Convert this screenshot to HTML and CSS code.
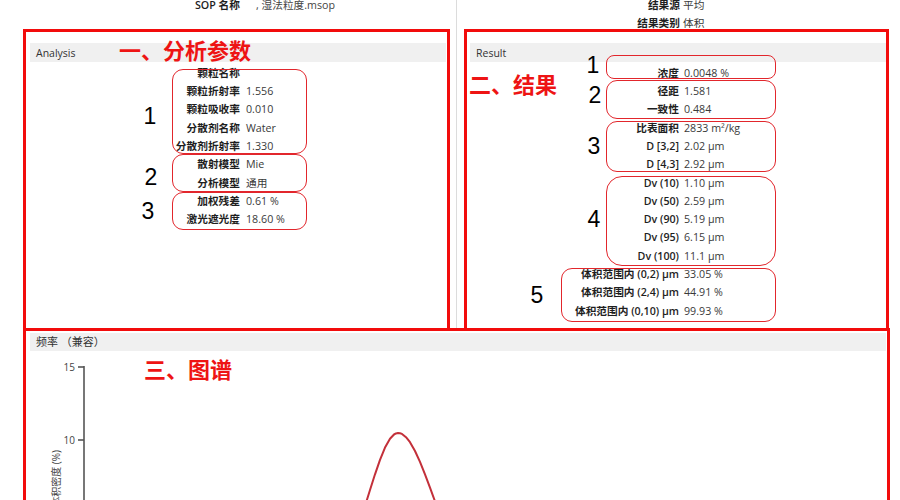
FILE: index.html
```html
<!DOCTYPE html>
<html lang="zh-CN">
<head>
<meta charset="utf-8">
<title>分析结果</title>
<link rel="stylesheet" href="styles.css">
</head>
<body>
<div class="page">
  <div class="upper">
    <div class="col col-left">
      <div class="meta">
        <div class="kv kv-top-left">
          <span class="k">SOP 名称</span><span class="v">, 湿法粒度.msop</span>
        </div>
      </div>
      <section class="panel panel-left">
        <div class="panel-head">Analysis</div>
        <div class="kv kv-left">
          <span class="k">颗粒名称</span><span class="v"></span>
          <span class="k">颗粒折射率</span><span class="v">1.556</span>
          <span class="k">颗粒吸收率</span><span class="v">0.010</span>
          <span class="k">分散剂名称</span><span class="v">Water</span>
          <span class="k">分散剂折射率</span><span class="v">1.330</span>
          <span class="k">散射模型</span><span class="v">Mie</span>
          <span class="k">分析模型</span><span class="v">通用</span>
          <span class="k">加权残差</span><span class="v">0.61 %</span>
          <span class="k">激光遮光度</span><span class="v">18.60 %</span>
        </div>
      </section>
    </div>
    <div class="sep"></div>
    <div class="col col-right">
      <div class="meta">
        <div class="kv kv-top-right">
          <span class="k">结果源</span><span class="v">平均</span>
          <span class="k">结果类别</span><span class="v">体积</span>
        </div>
      </div>
      <section class="panel panel-right">
        <div class="panel-head">Result</div>
        <div class="kv kv-right">
          <span class="k">浓度</span><span class="v">0.0048 %</span>
          <span class="k">径距</span><span class="v">1.581</span>
          <span class="k">一致性</span><span class="v">0.484</span>
          <span class="k">比表面积</span><span class="v">2833 m²/kg</span>
          <span class="k">D [3,2]</span><span class="v">2.02 μm</span>
          <span class="k">D [4,3]</span><span class="v">2.92 μm</span>
          <span class="k">Dv (10)</span><span class="v">1.10 μm</span>
          <span class="k">Dv (50)</span><span class="v">2.59 μm</span>
          <span class="k">Dv (90)</span><span class="v">5.19 μm</span>
          <span class="k">Dv (95)</span><span class="v">6.15 μm</span>
          <span class="k">Dv (100)</span><span class="v">11.1 μm</span>
          <span class="k">体积范围内 (0,2) μm</span><span class="v">33.05 %</span>
          <span class="k">体积范围内 (2,4) μm</span><span class="v">44.91 %</span>
          <span class="k">体积范围内 (0,10) μm</span><span class="v">99.93 %</span>
        </div>
      </section>
    </div>
  </div>

  <section class="graph">
    <div class="panel-head">频率 （兼容）</div>
    <svg class="chart" width="856" height="150" viewBox="0 0 856 150">
      <g transform="translate(-30 -351)">
        <line class="axis" x1="84" y1="366" x2="84" y2="520"/>
        <line class="axis" x1="78" y1="367" x2="84" y2="367"/>
        <line class="axis" x1="78" y1="440" x2="84" y2="440"/>
        <text class="tick" x="75" y="370.5" text-anchor="end">15</text>
        <text class="tick" x="75" y="443.5" text-anchor="end">10</text>
        <text class="ylabel" transform="translate(60 450) rotate(-90)" text-anchor="end">体积密度 (%)</text>
        <polyline class="curve" points="340,565 350,547 360,521 365,506 370,490 375,474.3 380,459.8 385,447.6 390,438.7 394,434.5 396,433.4 398,433 400,433.2 402,433.9 406,437.2 410,442.2 415,451 420,461.9 425,474.4 430,487.7 435,501.4 440,514.7 450,538.5"/>
      </g>
    </svg>
  </section>

  <!-- annotation overlays -->
  <div class="note-title nt1">一、分析参数</div>
  <div class="note-title nt2">二、结果</div>
  <div class="note-title nt3">三、图谱</div>

  <div class="ring rl1"></div>
  <div class="ring rl2"></div>
  <div class="ring rl3"></div>
  <div class="ring rr1"></div>
  <div class="ring rr2"></div>
  <div class="ring rr3"></div>
  <div class="ring rr4"></div>
  <div class="ring rr5"></div>

  <div class="num nl1">1</div>
  <div class="num nl2">2</div>
  <div class="num nl3">3</div>
  <div class="num nr1">1</div>
  <div class="num nr2">2</div>
  <div class="num nr3">3</div>
  <div class="num nr4">4</div>
  <div class="num nr5">5</div>
</div>
</body>
</html>
```

FILE: styles.css
```css
html, body {
  margin: 0;
  padding: 0;
  background: #ffffff;
}

body {
  font-family: "Open Sans", "Noto Sans CJK SC", sans-serif;
  font-size: 10.7px;
  color: #222;
}

.page {
  position: relative;
  width: 900px;
  height: 500px;
  overflow: hidden;
}

.upper {
  display: flex;
  height: 328px;
}

.col-left {
  width: 450px;
}

.sep {
  width: 6px;
  margin-right: 7px;
  border-right: 1px solid #dcdcdc;
}

.col-right {
  width: 425px;
}

.meta {
  display: flow-root;
  height: 29px;
}

.kv {
  display: grid;
  align-items: center;
}

.kv .k {
  text-align: right;
  font-weight: 600;
  color: #1e1e1e;
  white-space: nowrap;
}

.kv .v {
  color: #3a3a3a;
  white-space: nowrap;
}

.kv-top-left {
  margin-top: -4px;
  line-height: 18px;
  grid-template-columns: 240px auto;
  column-gap: 16px;
}

.kv-top-left .v {
  color: #444;
}

.kv-top-right {
  margin-top: -4px;
  line-height: 18px;
  grid-template-columns: 216px auto;
  column-gap: 3px;
}

.panel {
  box-sizing: border-box;
  height: 299px;
  border: 3px solid #f20c0c;
  border-bottom: none;
}

.panel-left {
  margin-left: 23px;
  width: 427px;
  padding: 11px 1px 0 4px;
}

.panel-right {
  width: 425px;
  padding: 11px 0 0 3px;
}

.panel-head {
  height: 19px;
  line-height: 20px;
  padding-left: 6px;
  background: #f0f0f0;
  font-size: 10.5px;
  color: #333;
}

.kv-left,
.kv-right {
  margin-top: 1.8px;
  line-height: 18.3px;
}

.kv-left {
  grid-template-columns: 210px auto;
  column-gap: 6px;
}

.kv-right {
  grid-template-columns: 209px auto;
  column-gap: 5px;
}

.graph {
  box-sizing: border-box;
  margin-left: 23px;
  width: 867px;
  height: 172px;
  border: 3px solid #f20c0c;
  border-bottom: none;
  padding: 2px 1px 0 4px;
}

.graph .panel-head {
  height: 18px;
  line-height: 18px;
  font-size: 11px;
}

.chart {
  display: block;
}

.axis {
  stroke: #555;
  stroke-width: 1.6;
}

.tick {
  font-family: "Open Sans", sans-serif;
  font-size: 10px;
  fill: #444;
}

.ylabel {
  font-family: "Open Sans", "Noto Sans CJK SC", sans-serif;
  font-size: 10px;
  fill: #444;
}

.curve {
  fill: none;
  stroke: #c3303a;
  stroke-width: 2;
  stroke-linejoin: round;
}

/* annotation overlays */
.note-title {
  position: absolute;
  font-family: "Noto Sans CJK SC", sans-serif;
  font-weight: 700;
  font-size: 22px;
  line-height: 22px;
  color: #ee1414;
  white-space: nowrap;
}

.nt1 { left: 119px; top: 38px; }
.nt2 { left: 469px; top: 72px; }
.nt3 { left: 144px; top: 357px; }

.ring {
  position: absolute;
  box-sizing: border-box;
  border: 1.5px solid #e2262c;
  border-radius: 11px;
}

.rl1 { left: 172px; top: 69px;  width: 135px; height: 85px; }
.rl2 { left: 172px; top: 154px; width: 135px; height: 38px; }
.rl3 { left: 172px; top: 192px; width: 135px; height: 38px; }
.rr1 { left: 606px; top: 55px;  width: 170px; height: 24px; border-radius: 8px; }
.rr2 { left: 606px; top: 80px;  width: 170px; height: 39px; }
.rr3 { left: 606px; top: 121px; width: 170px; height: 51px; }
.rr4 { left: 606px; top: 176px; width: 170px; height: 90px; border-radius: 16px; }
.rr5 { left: 561px; top: 268px; width: 215px; height: 54px; }

.num {
  position: absolute;
  width: 20px;
  height: 24px;
  margin-left: -10px;
  margin-top: -12px;
  line-height: 24px;
  text-align: center;
  font-family: "Liberation Sans", sans-serif;
  font-size: 23px;
  color: #000;
}

.nl1 { left: 150px; top: 116px; }
.nl2 { left: 151px; top: 177px; }
.nl3 { left: 148px; top: 211px; }
.nr1 { left: 593px; top: 65px; }
.nr2 { left: 595px; top: 95px; }
.nr3 { left: 594px; top: 146px; }
.nr4 { left: 594px; top: 219px; }
.nr5 { left: 537px; top: 295px; }
```
